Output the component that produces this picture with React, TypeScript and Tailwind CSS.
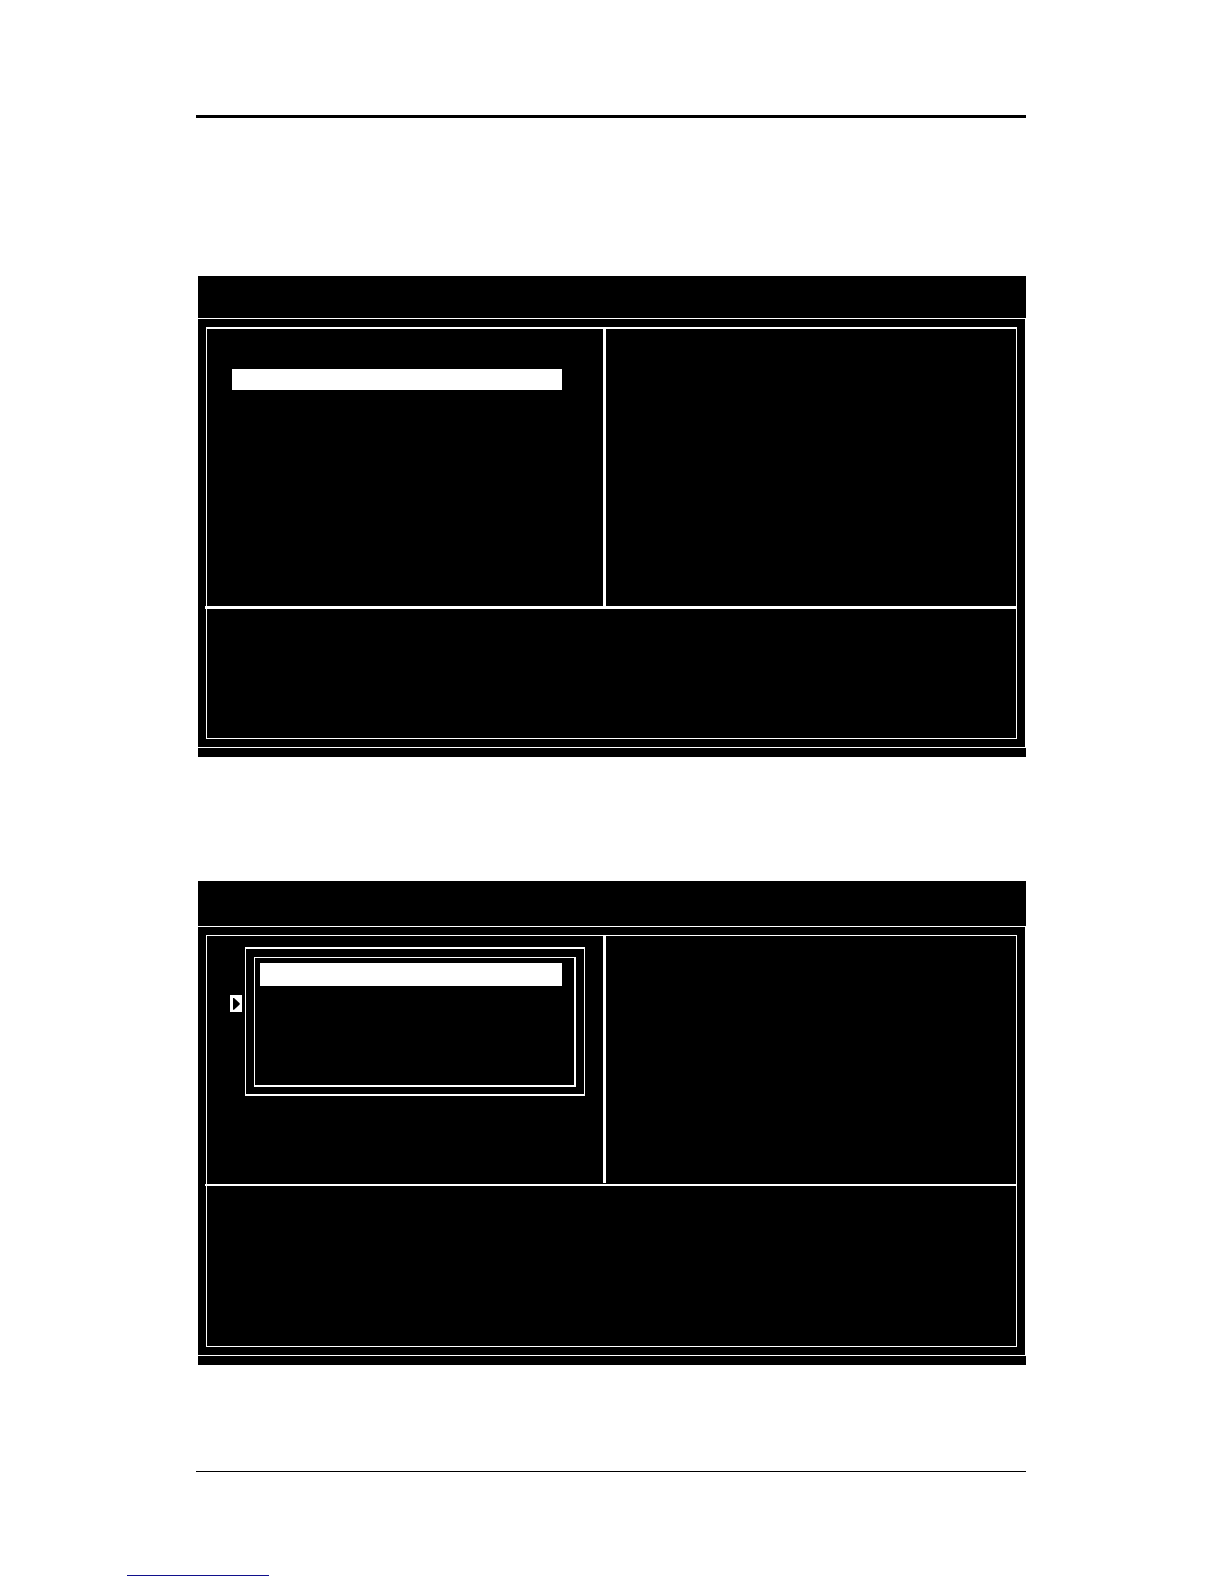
import React from 'react';
import clsx from 'clsx';

interface SetupScreenProps {
    headerClassName: string;
    frameClassName: string;
    dividerClassName: string;
    footerClassName: string;
    children: React.ReactNode;
}

// Double-framed setup screen: title bar, two columns and a help area below
const SetupScreen: React.FC<SetupScreenProps> = ({
    headerClassName,
    frameClassName,
    dividerClassName,
    footerClassName,
    children,
}) => {
    return (
        <section className="ml-0.5">
            <header className={clsx('bg-black', headerClassName)} />
            <div className="my-px mr-px bg-black p-2">
                <div className={clsx('border border-white', frameClassName)}>
                    <div className="flex">
                        <div className="w-[396px] shrink-0">{children}</div>
                        <div className="w-[3px] shrink-0 bg-white" />
                        <div className="flex-1" />
                    </div>
                    <div className={clsx('-ml-0.5 bg-white', dividerClassName)} />
                    <div className={footerClassName} />
                </div>
            </div>
            <div className="h-[9px] bg-black" />
        </section>
    );
};

const MenuScreen: React.FC = () => {
    return (
        <SetupScreen
            headerClassName="h-[42px]"
            frameClassName="border-t-2"
            dividerClassName="h-[3px]"
            footerClassName="h-[129px]"
        >
            <div className="h-[277px] pt-10 pr-[41px] pl-[25px]">
                <div className="h-[21px] bg-white" />
            </div>
        </SetupScreen>
    );
};

const SubmenuScreen: React.FC = () => {
    return (
        <SetupScreen
            headerClassName="h-[45px]"
            frameClassName=""
            dividerClassName="mt-px h-0.5"
            footerClassName="h-[160px]"
        >
            <div className="flex h-[247px] items-start gap-[3px] pt-[11px] pr-[18px] pl-[23px]">
                {/* Submenu marker */}
                <svg className="mt-12 h-[17px] w-3 shrink-0" viewBox="0 0 12 17" aria-hidden="true">
                    <rect width="12" height="17" fill="white" />
                    <path d="M3 3H4L9.7 8.2V9.6L4 14.7H3Z" fill="black" />
                </svg>

                {/* Popup list */}
                <div className="flex-1 border-x border-y-2 border-white px-2 pt-2 pb-[7px]">
                    <div className="h-[130px] border border-r-2 border-b-2 border-white pt-[5px] pr-3 pl-[5px]">
                        <div className="h-[23px] bg-white" />
                    </div>
                </div>
            </div>
        </SetupScreen>
    );
};

const App: React.FC = () => {
    return (
        <main className="min-h-screen bg-white pt-[115px] pb-2">
            <div className="mr-[198px] ml-[196px]">
                <hr className="mb-[158px] border-t-[3px] border-black" />
                <div className="flex flex-col gap-[124px]">
                    <MenuScreen />
                    <SubmenuScreen />
                </div>
                <hr className="mt-[106px] border-t border-black" />
            </div>
            <hr className="mt-[103px] ml-[127px] w-[142px] border-t border-[#10108c]" />
        </main>
    );
};

export default App;
